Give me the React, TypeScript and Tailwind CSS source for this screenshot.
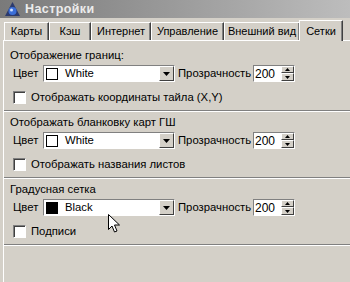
import React from 'react'

const tabs = [
  { label: 'Карты', w: 'w-[45px]' },
  { label: 'Кэш', w: 'w-[42px]' },
  { label: 'Интернет', w: 'w-[60px]' },
  { label: 'Управление', w: 'w-[73px]' },
  { label: 'Внешний вид', w: 'w-[76px]' },
]

function Checkbox({ label }: { label: string }) {
  return (
    <div className="flex items-center h-[17px] pl-[9px]">
      <span className="w-[13px] h-[13px] bg-white border-t border-l border-t-[#808080] border-l-[#808080] border-b border-r border-b-white border-r-white shadow-[inset_1px_1px_0_#404040]" />
      <span className="ml-[5px]">{label}</span>
    </div>
  )
}

function Combo({ color, name }: { color: string; name: string }) {
  return (
    <div className="w-[132px] h-[17px] bg-white flex items-center border-t border-l border-t-[#808080] border-l-[#808080] border-b border-r border-b-white border-r-white">
      <span className={`ml-[2px] w-[12px] h-[12px] border border-black ${color}`} />
      <span className="ml-[7px] flex-1">{name}</span>
      <span className="w-[15px] h-[15px] bg-[#d4d0c8] flex items-center justify-center border-t border-l border-t-white border-l-white border-b border-r border-b-[#404040] border-r-[#404040]">
        <svg width="7" height="4" viewBox="0 0 7 4"><path d="M0 0h7L3.5 4z" fill="#000" /></svg>
      </span>
    </div>
  )
}

function Spin() {
  return (
    <div className="w-[42px] h-[17px] bg-white flex items-center border-t border-l border-t-[#808080] border-l-[#808080] border-b border-r border-b-white border-r-white">
      <span className="ml-[1px] flex-1 text-[12px]">200</span>
      <div className="flex flex-col w-[13px] h-[15px]">
        <span className="h-[7px] bg-[#d4d0c8] flex items-center justify-center border-t border-l border-t-white border-l-white border-b border-r border-b-[#404040] border-r-[#404040]">
          <svg width="5" height="3" viewBox="0 0 5 3"><path d="M0 3h5L2.5 0z" fill="#000" /></svg>
        </span>
        <span className="h-[8px] bg-[#d4d0c8] flex items-center justify-center border-t border-l border-t-white border-l-white border-b border-r border-b-[#404040] border-r-[#404040]">
          <svg width="5" height="3" viewBox="0 0 5 3"><path d="M0 0h5L2.5 3z" fill="#000" /></svg>
        </span>
      </div>
    </div>
  )
}

function Section({ title, color, name, check, first }: { title: string; color: string; name: string; check: string; first?: boolean }) {
  return (
    <div className={`${first ? 'pt-[7px]' : 'pt-[4px]'} pb-[4px] border-b border-b-[#808080] shadow-[0_1px_0_#fff]`}>
      <div className="h-[14px] leading-[14px] pl-[6px]">{title}</div>
      <div className="mt-[3px] flex items-center h-[17px] pl-[9px]">
        <span className="w-[30px]">Цвет</span>
        <Combo color={color} name={name} />
        <span className="ml-[3px] w-[75px]">Прозрачность</span>
        <Spin />
      </div>
      <div className="mt-[7px]">
        <Checkbox label={check} />
      </div>
    </div>
  )
}

export default function App() {
  return (
    <div className="w-[350px] h-[282px] bg-[#d4d0c8] overflow-hidden relative text-[11.3px] text-black font-['Liberation_Sans',Arial,sans-serif]">
      <div className="h-[18px] flex items-center gap-[5px] pl-[5px] bg-gradient-to-r from-[#7a7a7a] to-[#bdbdbd]">
        <svg width="15" height="14" viewBox="0 0 15 14">
          <path d="M7.5 0L15 14H0z" fill="#2b3a6e" />
          <circle cx="7.5" cy="9" r="4" fill="#3c6fd8" />
          <circle cx="6.5" cy="8" r="1.5" fill="#cfe0ff" />
        </svg>
        <span className="font-bold text-[#ececec] text-[12.5px] tracking-[0.4px]">Настройки</span>
      </div>
      <div className="h-[22px] flex items-end pl-[4px] text-[11px]">
        {tabs.map((t) => (
          <div key={t.label} className={`${t.w} h-[18px] whitespace-nowrap flex items-center justify-center border-t border-l border-t-white border-l-white border-r border-r-[#404040] shadow-[inset_-1px_0_0_#808080]`}>
            {t.label}
          </div>
        ))}
        <div className="w-[44px] h-[21px] -mb-[1px] -ml-[1px] flex items-center justify-center bg-[#d4d0c8] relative z-10 border-t border-l border-t-white border-l-white border-r border-r-[#404040] shadow-[inset_-1px_0_0_#808080]">
          Сетки
        </div>
      </div>
      <div className="ml-[3px] h-[242px] border-t border-l border-t-white border-l-white">
        <Section first title="Отображение границ:" color="bg-white" name="White" check="Отображать координаты тайла (X,Y)" />
        <Section title="Отображать бланковку карт ГШ" color="bg-white" name="White" check="Отображать названия листов" />
        <Section title="Градусная сетка" color="bg-black" name="Black" check="Подписи" />
      </div>
      <svg className="absolute left-[108px] top-[214px]" width="12" height="19" viewBox="0 0 12 19">
        <path d="M0.5 0.5V15.5L4 12L6.5 18L9 17L6.5 11H11.5Z" fill="#fff" stroke="#000" strokeWidth="1" />
      </svg>
    </div>
  )
}
